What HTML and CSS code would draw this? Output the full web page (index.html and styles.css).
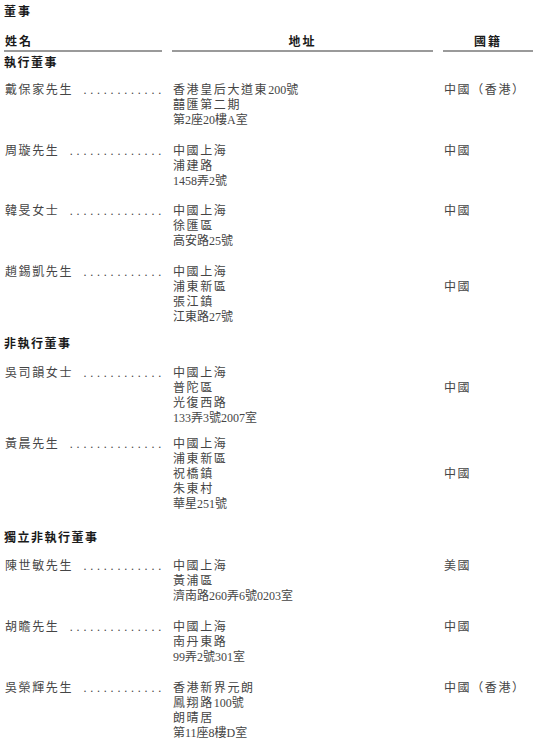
FILE: index.html
```html
<!DOCTYPE html>
<html lang="zh-Hant">
<head>
<meta charset="utf-8">
<link rel="stylesheet" href="styles.css">
</head>
<body>
<div class="page">
  <h1 class="title">董事</h1>

  <div class="row head">
    <div class="hcell left">姓名</div>
    <div class="hcell center">地址</div>
    <div class="hcell center">國籍</div>
  </div>

  <h2 class="section s1">執行董事</h2>
  <div class="group g1">
    <div class="row entry">
      <div class="name"><span class="nm">戴保家先生</span><span class="dots">............</span></div>
      <div class="addr"><div>香港皇后大道東<span class="t">200號</span></div><div>囍匯第二期</div><div class="t">第2座20樓A室</div></div>
      <div class="nat">中國（香港）</div>
    </div>
    <div class="row entry">
      <div class="name"><span class="nm">周璇先生</span><span class="dots">..............</span></div>
      <div class="addr"><div>中國上海</div><div>浦建路</div><div class="t">1458弄2號</div></div>
      <div class="nat">中國</div>
    </div>
    <div class="row entry">
      <div class="name"><span class="nm">韓旻女士</span><span class="dots">..............</span></div>
      <div class="addr"><div>中國上海</div><div>徐匯區</div><div class="t">高安路25號</div></div>
      <div class="nat">中國</div>
    </div>
    <div class="row entry">
      <div class="name"><span class="nm">趙錫凱先生</span><span class="dots">............</span></div>
      <div class="addr"><div>中國上海</div><div>浦東新區</div><div>張江鎮</div><div class="t">江東路27號</div></div>
      <div class="nat l2">中國</div>
    </div>
  </div>

  <h2 class="section s2">非執行董事</h2>
  <div class="group g2">
    <div class="row entry">
      <div class="name"><span class="nm">吳司韻女士</span><span class="dots">............</span></div>
      <div class="addr"><div>中國上海</div><div>普陀區</div><div>光復西路</div><div class="t">133弄3號2007室</div></div>
      <div class="nat l2">中國</div>
    </div>
    <div class="row entry">
      <div class="name"><span class="nm">黃晨先生</span><span class="dots">..............</span></div>
      <div class="addr"><div>中國上海</div><div>浦東新區</div><div>祝橋鎮</div><div>朱東村</div><div class="t">華星251號</div></div>
      <div class="nat l3">中國</div>
    </div>
  </div>

  <h2 class="section s3">獨立非執行董事</h2>
  <div class="group g3">
    <div class="row entry">
      <div class="name"><span class="nm">陳世敏先生</span><span class="dots">............</span></div>
      <div class="addr"><div>中國上海</div><div>黃浦區</div><div class="t">濟南路260弄6號0203室</div></div>
      <div class="nat">美國</div>
    </div>
    <div class="row entry">
      <div class="name"><span class="nm">胡瞻先生</span><span class="dots">..............</span></div>
      <div class="addr"><div>中國上海</div><div>南丹東路</div><div class="t">99弄2號301室</div></div>
      <div class="nat">中國</div>
    </div>
    <div class="row entry">
      <div class="name"><span class="nm">吳榮輝先生</span><span class="dots">............</span></div>
      <div class="addr"><div>香港新界元朗</div><div>鳳翔路<span class="t">100號</span></div><div>朗晴居</div><div class="t">第11座8樓D室</div></div>
      <div class="nat">中國（香港）</div>
    </div>
  </div>
</div>
</body>
</html>
```

FILE: styles.css
```css
html, body {
  margin: 0;
  padding: 0;
  background: #ffffff;
}

body {
  font-family: "Liberation Serif", "Noto Sans CJK TC", serif;
  font-size: 12px;
  color: #454545;
}

.page {
  width: 550px;
  padding: 3px 0 0 4px;
  box-sizing: border-box;
}

.title {
  margin: 0;
  font-family: "Noto Sans CJK TC", sans-serif;
  font-size: 12px;
  font-weight: 700;
  line-height: 16px;
  letter-spacing: 2px;
  color: #1a1a1a;
}

.row {
  display: grid;
  grid-template-columns: 158px 261px 90px;
  column-gap: 10px;
}

.head {
  margin-top: 14px;
}

.hcell {
  font-family: "Noto Sans CJK TC", sans-serif;
  font-weight: 700;
  font-size: 12px;
  line-height: 16px;
  letter-spacing: 2px;
  color: #1a1a1a;
  padding-bottom: 1px;
  border-bottom: 2px solid #9a9a9a;
}

.hcell.left {
  text-align: left;
  padding-left: 1px;
}

.hcell.center {
  text-align: center;
}

.section {
  margin: 0;
  font-family: "Noto Sans CJK TC", sans-serif;
  font-size: 12px;
  font-weight: 700;
  line-height: 16px;
  letter-spacing: 1.5px;
  color: #1a1a1a;
}

.section.s1 {
  margin: 2px 0 13px 0;
}

.section.s2 {
  margin: 10.5px 0 14.5px 0;
}

.section.s3 {
  margin: 17.5px 0 13.5px 0;
}

.group {
  display: flex;
  flex-direction: column;
  gap: 15.5px;
}

.group.g2 {
  gap: 11px;
}

.group.g3 {
  gap: 16px;
}

.entry {
  line-height: 15px;
}

.name {
  display: flex;
  white-space: nowrap;
  letter-spacing: 1.6px;
}

.nm {
  flex: none;
  padding-left: 1px;
}

.dots {
  flex: none;
  margin-left: auto;
  margin-right: -3px;
  letter-spacing: 3.8px;
}

.addr {
  padding-left: 1px;
  letter-spacing: 1.6px;
}

.addr .t {
  letter-spacing: 0;
}

.nat {
  padding-left: 1px;
  letter-spacing: 1.6px;
}

.nat.l2 {
  padding-top: 15px;
}

.nat.l3 {
  padding-top: 30px;
}
```
